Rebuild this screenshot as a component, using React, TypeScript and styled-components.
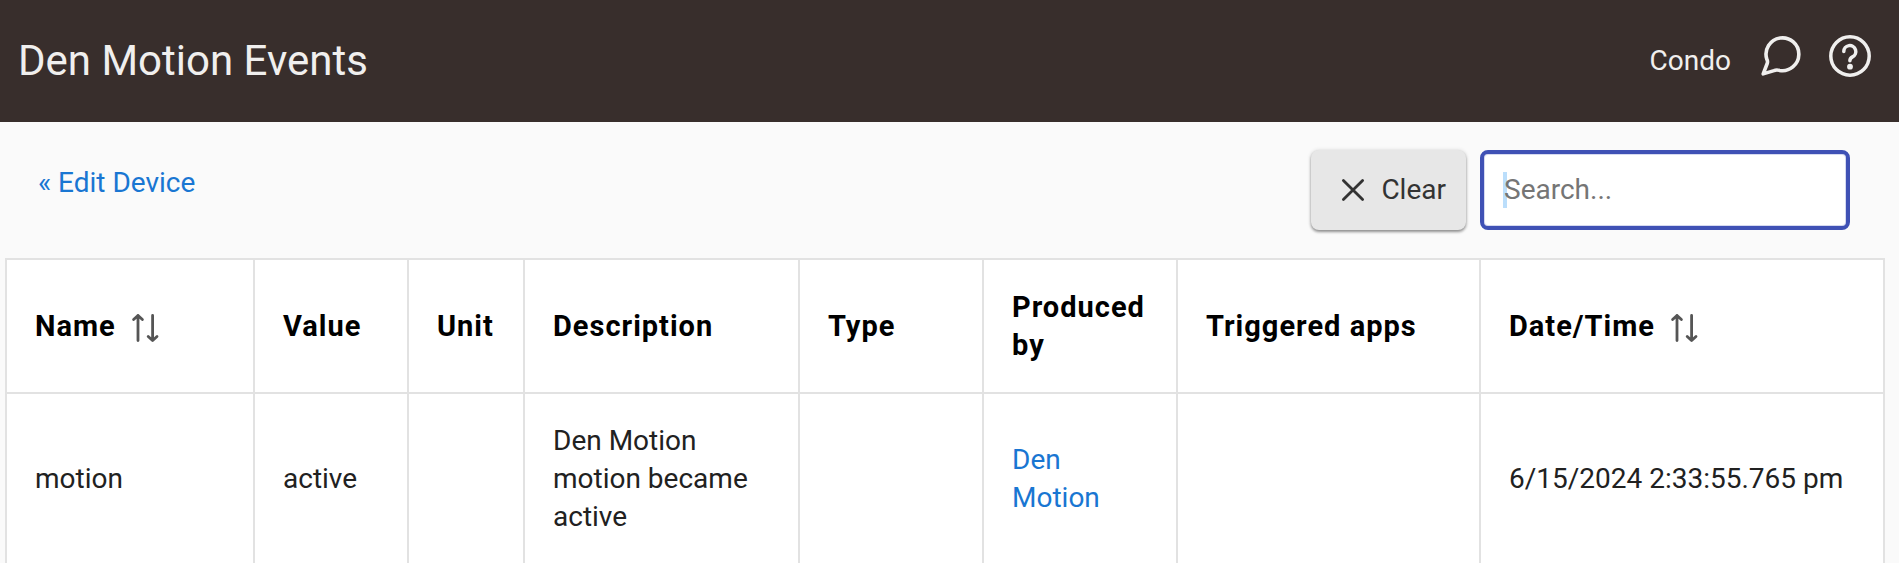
import React, { useState } from "react";
import styled, { createGlobalStyle } from "styled-components";

const GlobalStyle = createGlobalStyle`
  *, *::before, *::after { box-sizing: border-box; }
  body {
    margin: 0;
    background: #fafafa;
    color: #212121;
    font-family: Roboto, "Liberation Sans", sans-serif;
    font-size: 28px;
    line-height: 38px;
  }
  html { scrollbar-width: none; }
`;

const Header = styled.header`
  display: flex;
  align-items: center;
  justify-content: space-between;
  height: 122px;
  padding: 0 28px 0 18px;
  background: #382e2c;
  color: #f0efee;
`;

const Title = styled.h1`
  margin: 0;
  font-size: 42px;
  line-height: 48px;
  font-weight: 400;
`;

const HeaderTools = styled.nav`
  display: flex;
  align-items: center;
`;

const HubName = styled.span`
  margin-right: 30px;
`;

const IconButton = styled.button`
  display: flex;
  padding: 0;
  margin: 0 0 10px 26px;
  border: 0;
  background: none;
  color: inherit;

  &:first-of-type { margin-left: 0; }
`;

const Toolbar = styled.div`
  display: flex;
  align-items: flex-start;
  justify-content: space-between;
  padding: 28px 49px 28px 38px;
`;

const Link = styled.a`
  color: #1976d2;
  text-decoration: none;
`;

const BackLink = styled(Link)`
  padding-top: 14px;
`;

const Filters = styled.div`
  display: flex;
  gap: 14px;
`;

const ClearButton = styled.button`
  display: flex;
  align-items: center;
  gap: 12px;
  height: 80px;
  padding: 0 20px 0 26px;
  border: 0;
  border-radius: 8px;
  background: #e7e7e7;
  color: #333;
  font: inherit;
  box-shadow: 0 2px 3px rgba(0, 0, 0, 0.4), 0 0 4px rgba(0, 0, 0, 0.12);
`;

const SearchInput = styled.input`
  width: 370px;
  height: 80px;
  padding: 0 20px 2px;
  border: 4px solid #3f51b5;
  border-radius: 8px;
  outline: 0;
  background: linear-gradient(#bbdefb, #bbdefb) 19px center / 4px 36px no-repeat #fff;
  box-shadow: inset 0 0 0 1px #d5d9f0;
  color: #212121;
  font: inherit;

  &::placeholder { color: #757575; opacity: 1; }
`;

const TableArea = styled.main`
  padding: 0 14px 0 5px;
`;

const Table = styled.table`
  width: 100%;
  table-layout: fixed;
  border-collapse: collapse;
  background: #fff;
`;

const HeadCell = styled.th`
  padding: 28px;
  border: 2px solid #e2e2e2;
  color: #000;
  font-size: 29px;
  font-weight: 700;
  letter-spacing: 1px;
  text-align: left;
`;

const Cell = styled.td`
  padding: 28px;
  border: 2px solid #e2e2e2;
`;

const NoWrap = styled.span`
  white-space: nowrap;
`;

const SortButton = styled.button`
  display: flex;
  align-items: center;
  gap: 14px;
  padding: 0;
  border: 0;
  background: none;
  color: inherit;
  font: inherit;
  letter-spacing: inherit;
`;

const ChatIcon = () => (
  <svg width="42" height="42" viewBox="0 0 42 42" fill="none" stroke="currentColor" strokeWidth="3.6" strokeLinecap="round" strokeLinejoin="round" aria-hidden="true">
    <path d="M2.2 38.9 L6.2 28.5 Q7 26.5 5.8 24.2 A16.4 16.4 0 1 1 18.5 35.4 Q15.5 34.4 13 35.6 Z" />
  </svg>
);

const HelpIcon = () => (
  <svg width="42" height="42" viewBox="0 0 42 42" fill="none" stroke="currentColor" strokeWidth="3.5" strokeLinecap="round" aria-hidden="true">
    <circle cx="21" cy="21" r="19.2" />
    <path d="M14.8 16.6 a6 6 0 1 1 8.7 5.3 q-2.6 1.4 -2.6 3.8" />
    <circle cx="21" cy="31.7" r="2.9" fill="currentColor" stroke="none" />
  </svg>
);

const CloseIcon = () => (
  <svg width="32" height="32" viewBox="0 0 32 32" fill="none" stroke="currentColor" strokeWidth="2.8" strokeLinecap="round" aria-hidden="true">
    <path d="M6.4 6.4 L25.6 25.6 M25.6 6.4 L6.4 25.6" />
  </svg>
);

const SortIcon = () => (
  <svg width="30" height="34" viewBox="0 0 30 34" fill="none" stroke="#555" strokeWidth="2.8" strokeLinecap="round" strokeLinejoin="round" aria-hidden="true">
    <path d="M8 31.6 V6.4 M3.6 10.6 L8 6.4 L12.4 10.6" />
    <path d="M22.6 6.4 V31.6 M18.2 27.4 L22.6 31.6 L27 27.4" />
  </svg>
);

const columns = [
  { label: "Name", width: 248, sortable: true },
  { label: "Value", width: 154 },
  { label: "Unit", width: 116 },
  { label: "Description", width: 275 },
  { label: "Type", width: 184 },
  { label: "Produced by", width: 194 },
  { label: "Triggered apps", width: 303 },
  { label: "Date/Time", width: 404, sortable: true },
];

const events = [
  {
    name: "motion",
    value: "active",
    unit: "",
    description: "Den Motion motion became active",
    type: "",
    producedBy: "Den Motion",
    apps: "",
    time: "6/15/2024 2:33:55.765 pm",
  },
];

export default function App() {
  const [query, setQuery] = useState("");

  return (
    <>
      <GlobalStyle />
      <Header>
        <Title>Den Motion Events</Title>
        <HeaderTools aria-label="Hub">
          <HubName>Condo</HubName>
          <IconButton type="button" aria-label="Community">
            <ChatIcon />
          </IconButton>
          <IconButton type="button" aria-label="Help">
            <HelpIcon />
          </IconButton>
        </HeaderTools>
      </Header>
      <Toolbar>
        <BackLink href="#device">« Edit Device</BackLink>
        <Filters>
          <ClearButton type="button" onClick={() => setQuery("")}>
            <CloseIcon />
            Clear
          </ClearButton>
          <SearchInput
            type="text"
            aria-label="Search events"
            placeholder="Search..."
            value={query}
            onChange={(e) => setQuery(e.target.value)}
          />
        </Filters>
      </Toolbar>
      <TableArea>
        <Table>
          <colgroup>
            {columns.map((c) => (
              <col key={c.label} width={c.width} />
            ))}
          </colgroup>
          <thead>
            <tr>
              {columns.map((c) => (
                <HeadCell key={c.label} scope="col">
                  {c.sortable ? (
                    <SortButton type="button">
                      {c.label}
                      <SortIcon />
                    </SortButton>
                  ) : (
                    c.label
                  )}
                </HeadCell>
              ))}
            </tr>
          </thead>
          <tbody>
            {events.map((e) => (
              <tr key={e.time}>
                <Cell>{e.name}</Cell>
                <Cell>{e.value}</Cell>
                <Cell>{e.unit}</Cell>
                <Cell>{e.description}</Cell>
                <Cell>{e.type}</Cell>
                <Cell>
                  <Link href="#producer">{e.producedBy}</Link>
                </Cell>
                <Cell>{e.apps}</Cell>
                <Cell>
                  <NoWrap>{e.time}</NoWrap>
                </Cell>
              </tr>
            ))}
          </tbody>
        </Table>
      </TableArea>
    </>
  );
}
